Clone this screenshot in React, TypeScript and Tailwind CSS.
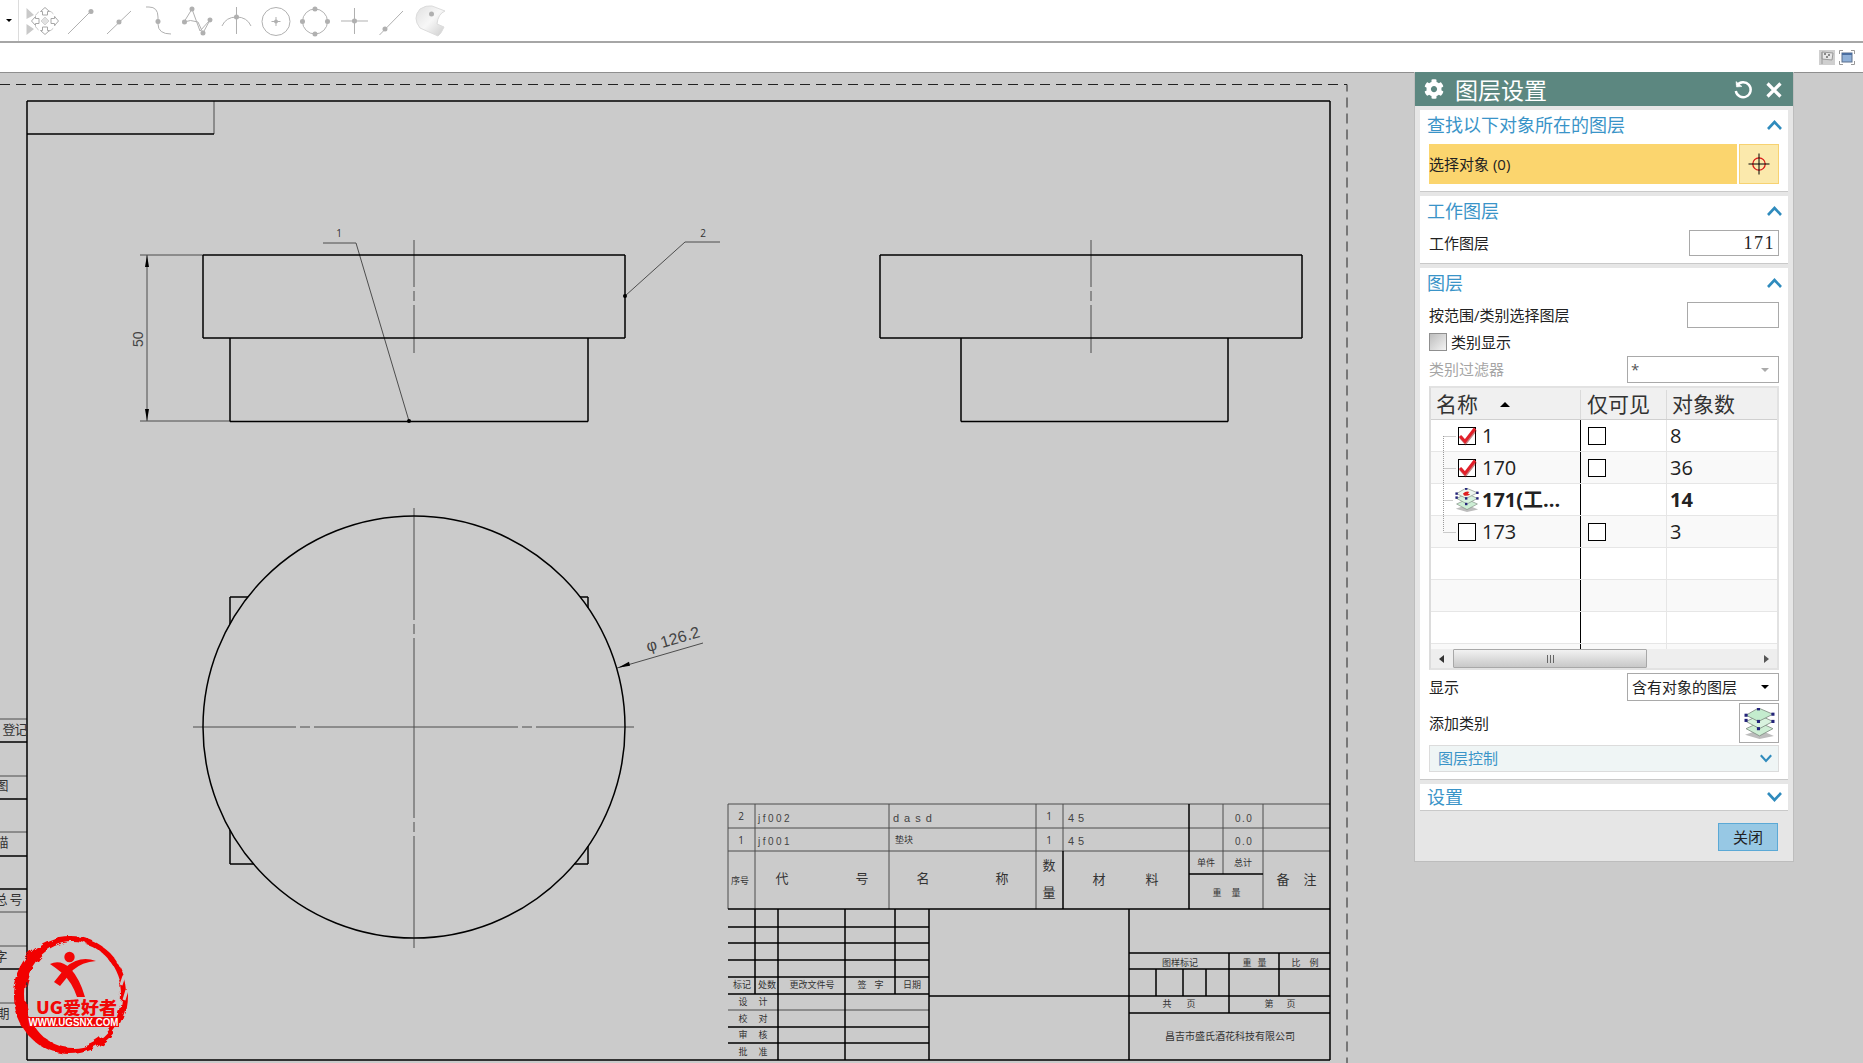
import React from "react";
import { FaCog } from "react-icons/fa";

type L = [number, number, number, number];

const gray = "#b0b0b0";

function Dot({ x, y, r = 2.500 }: { x: number; y: number; r?: number }) {
  return <circle cx={x} cy={y} r={r} fill={gray} stroke="none" />;
}

function Tool({ children, width = 39.3 }: { children: React.ReactNode; width?: number }) {
  return (
    <svg width={width} height={41} viewBox={`0 0 ${width} 41`} fill="none" stroke={gray} strokeWidth={1} className="shrink-0">
      {children}
    </svg>
  );
}

function Toolbar() {
  return (
    <div className="flex h-[43px] shrink-0 items-start border-b-2 border-[#a6a6a6] bg-white">
      <div className="flex h-[41px] w-[19px] shrink-0 items-center justify-end border-r border-[#dcdcdc] pr-[6px]">
        <span className="h-0 w-0 border-x-[3px] border-t-[3px] border-x-transparent border-t-black" />
      </div>
      <svg width={41} height={41} viewBox="0 0 41 41" fill="none" className="shrink-0">
        <path d="M7.500 8 L15 15 L7.500 19Z M7.500 24 L15 29 L7.500 35Z" fill="#c9c9c9" />
        <circle cx={26} cy={21} r={11} stroke="#c4c4c4" strokeDasharray="5 3" />
        <path d="M26 17 l4 4 l-4 4 l-4 -4Z" fill="#e2e2e2" stroke="#d2d2d2" />
        <path d="M23.500 15 v-3.500 h-2 l4.500 -4 l4.500 4 h-2 v3.500Z M23.500 27 v3.500 h-2 l4.500 4 l4.500 -4 h-2 v-3.500Z M20 18.500 h-3.500 v-2 l-4 4.500 l4 4.500 v-2 h3.500Z M32 18.500 h3.500 v-2 l4 4.500 l-4 4.500 v-2 h-3.500Z" fill="#fff" stroke="#a8a8a8" />
      </svg>
      <Tool><path d="M8 34 L31 11" /><Dot x={31} y={11.500} /></Tool>
      <Tool><path d="M8 34 L32 11" /><Dot x={20} y={22} /></Tool>
      <Tool><path d="M7 7 H10 Q19 7 19 17 V24 Q19 34 32 34" /><Dot x={19} y={21.500} /></Tool>
      <Tool>
        <path d="M6 22 L14 9 L22 31 L32 20 L25 33 L20 22 Q12 19 6 22" />
        <Dot x={14} y={9} /><Dot x={6.500} y={22} /><Dot x={32} y={20} /><Dot x={25} y={33} />
      </Tool>
      <Tool><path d="M19.500 7 V34 M5 26 Q9 17 19.500 17 Q30 17 34 26" /><Dot x={19.500} y={17} /></Tool>
      <Tool><circle cx={20} cy={21.500} r={14} /><path d="M20 17 V26 M15.500 21.500 H24.500" /><Dot x={20} y={21.500} r={2} /></Tool>
      <Tool>
        <circle cx={19} cy={21.500} r={12.500} />
        <Dot x={19} y={9} /><Dot x={19} y={34} /><Dot x={6.500} y={21.500} /><Dot x={31.500} y={21.500} />
      </Tool>
      <Tool><path d="M19.500 8 V34 M6 21 H33" /><Dot x={19.500} y={21} /></Tool>
      <Tool><path d="M5.500 35 L29 11" /><Dot x={11} y={29} /></Tool>
      <svg width={36} height={41} viewBox="0 0 36 41" className="shrink-0">
        <defs>
          <linearGradient id="sf" x1="0" y1="0" x2="1" y2="1">
            <stop offset="0" stopColor="#e0e0e0" />
            <stop offset="0.5" stopColor="#f7f7f7" />
            <stop offset="1" stopColor="#cccccc" />
          </linearGradient>
        </defs>
        <path d="M6 9 Q12 5 18 6 L31 11 Q24 14 23 24 L30 27 Q27 34 24 36 L6 28 Q-2 18 6 9Z" fill="url(#sf)" stroke="#dcdcdc" />
        <circle cx={17.500} cy={14} r={2.500} fill={gray} />
      </svg>
    </div>
  );
}

const heavy: L[] = [
  [27, 101, 1330, 101], [27, 101, 27, 1060], [27, 1060, 1330, 1060], [1330, 101, 1330, 1060],
  [27, 134, 214, 134],
  [203, 255, 625, 255], [203, 338, 625, 338], [203, 255, 203, 338], [625, 255, 625, 338],
  [230, 338, 230, 421.500], [588, 338, 588, 421.500], [230, 421.500, 588, 421.500],
  [880, 255, 1302, 255], [880, 338, 1302, 338], [880, 255, 880, 338], [1302, 255, 1302, 338],
  [961, 338, 961, 421.500], [1228, 338, 1228, 421.500], [961, 421.500, 1228, 421.500],
  [230, 597, 230, 624], [230, 597, 248, 597], [588, 597, 588, 608], [580, 597, 588, 597],
  [230, 830, 230, 864], [230, 864, 254, 864], [588, 846, 588, 864], [574, 864, 588, 864],
  [755, 909, 755, 994], [778, 909, 778, 1060], [845, 909, 845, 1060], [895, 909, 895, 994],
  [929, 909, 929, 1060], [728, 909, 1330, 909], [728, 927, 929, 927], [728, 943, 929, 943], [728, 960, 929, 960],
  [728, 977, 929, 977], [728, 994, 929, 994], [728, 1027, 929, 1027], [728, 1043, 929, 1043],
  [929, 996, 1330, 996], [1129, 909, 1129, 1060], [1129, 953, 1330, 953], [1129, 969, 1330, 969], [1129, 1013, 1330, 1013],
  [1229, 953, 1229, 1013], [1279, 953, 1279, 996], [1156, 969, 1156, 996], [1183, 969, 1183, 996], [1206, 969, 1206, 996],
  [1189, 874, 1263, 874], [1063, 851, 1063, 909], [1189, 804, 1189, 909],
  [0, 742, 27, 742], [0, 799, 27, 799], [0, 856, 27, 856], [0, 889, 27, 889], [0, 969, 27, 969], [0, 1027, 27, 1027],
];

const thin: L[] = [
  [214, 101, 214, 134],
  [140, 255, 203, 255], [140, 421, 230, 421], [147, 255, 147, 421],
  [323, 243, 356, 243], [356, 243, 409, 421], [625, 296, 685, 242], [685, 242, 720, 242],
  [414, 240, 414, 287], [414, 291, 414, 301], [414, 305, 414, 353],
  [1091, 240, 1091, 287], [1091, 291, 1091, 301], [1091, 305, 1091, 353],
  [193, 727, 296, 727], [300, 727, 310, 727], [314, 727, 518, 727], [522, 727, 532, 727], [536, 727, 634, 727],
  [414, 508, 414, 620], [414, 624, 414, 634], [414, 638, 414, 818], [414, 822, 414, 832], [414, 836, 414, 948],
  [617, 668, 703, 643],
  [728, 804, 1330, 804], [728, 828, 1330, 828], [728, 851, 1330, 851], [728, 804, 728, 909],
  [755, 804, 755, 909], [889, 804, 889, 909], [1036, 804, 1036, 909], [1063, 804, 1063, 851], [1223, 804, 1223, 874], [1263, 804, 1263, 909],
  [728, 1010, 929, 1010],
  [0, 719, 27, 719], [0, 776, 27, 776], [0, 832, 27, 832], [0, 912, 27, 912], [0, 946, 27, 946], [0, 1003, 27, 1003],
];

type T = [string, number, number, number?];

const small: T[] = [
  ["标记", 742, 985], ["处数", 767, 985], ["更改文件号", 812, 985], ["签", 862, 985], ["字", 879, 985], ["日期", 912, 985],
  ["设", 743, 1002], ["计", 763, 1002], ["校", 743, 1019], ["对", 763, 1019], ["审", 743, 1035], ["核", 763, 1035], ["批", 743, 1052], ["准", 763, 1052],
  ["图样标记", 1180, 963], ["重", 1247, 963], ["量", 1262, 963], ["比", 1296, 963], ["例", 1314, 963],
  ["共", 1167, 1004], ["页", 1191, 1004], ["第", 1269, 1004], ["页", 1291, 1004],
  ["单件", 1206, 863], ["总计", 1243, 863], ["重", 1217, 893], ["量", 1236, 893], ["序号", 740, 881], ["垫块", 904, 840],
  ["昌吉市盛氏酒花科技有限公司", 1230, 1037, 10],
  ["代", 782, 880, 13], ["号", 862, 880, 13], ["名", 923, 880, 13], ["称", 1002, 880, 13],
  ["数", 1049, 867, 13], ["量", 1049, 894, 13], ["材", 1099, 881, 13], ["料", 1152, 881, 13], ["备", 1283, 881, 13], ["注", 1310, 881, 13],
  ["登", 9, 731, 13], ["记", 21, 731, 13], ["图", 2, 787, 13], ["描", 2, 844, 13], ["总", 1, 901, 13], ["号", 16, 901, 13], ["字", 1, 958, 13], ["期", 3, 1015, 13],
];

const latin: T[] = [
  ["2", 741, 820], ["1", 741, 844], ["1", 1049, 820], ["1", 1049, 844], ["1", 339, 237], ["2", 703, 237],
];

function Drawing() {
  return (
    <svg width={1863} height={990} viewBox="0 73 1863 990" className="block">
      <defs>
        <filter id="rough" x="-10%" y="-10%" width="120%" height="120%">
          <feTurbulence type="fractalNoise" baseFrequency="0.09" numOctaves="3" seed="4" />
          <feDisplacementMap in="SourceGraphic" scale="7" />
        </filter>
      </defs>
      <path d="M0 84.500 H1347 V1063" fill="none" stroke="#222" strokeWidth={1} strokeDasharray="10 6" />
      {thin.map(([a, b, c, d], i) => (
        <line key={i} x1={a} y1={b} x2={c} y2={d} stroke="#4d4d4d" strokeWidth={1} />
      ))}
      {heavy.map(([a, b, c, d], i) => (
        <line key={i} x1={a} y1={b} x2={c} y2={d} stroke="#000" strokeWidth={1.500} />
      ))}
      <circle cx={414} cy={727} r={211} fill="none" stroke="#000" strokeWidth={1.500} />
      <circle cx={625} cy={296} r={2} fill="#000" />
      <circle cx={409} cy={421} r={2} fill="#000" />
      <path d="M147 255 l-2 12 h4Z M147 421 l-2 -12 h4Z M618 667.700 l11 -6 l1 4Z" fill="#000" />
      <g fill="#333" textAnchor="middle">
        {small.map(([s, x, y, f], i) => (
          <text key={i} x={x} y={y + 3} fontSize={f ?? 9}>{s}</text>
        ))}
        {latin.map(([s, x, y], i) => (
          <text key={i} x={x} y={y} fontSize={10}>{s}</text>
        ))}
      </g>
      <g fill="#444" fontSize={10} fontFamily="Liberation Sans">
        <text x={758} y={822} letterSpacing={2.500}>jf002</text>
        <text x={758} y={845} letterSpacing={2.500}>jf001</text>
        <text x={893} y={822} fontSize={11} letterSpacing={5}>dasd</text>
        <text x={1068} y={822} fontSize={11} letterSpacing={4}>45</text>
        <text x={1068} y={845} fontSize={11} letterSpacing={4}>45</text>
        <text x={1235} y={822} letterSpacing={1.500}>0.0</text>
        <text x={1235} y={845} letterSpacing={1.500}>0.0</text>
        <text x={0} y={0} fontSize={14} transform="translate(143 347) rotate(-90)">50</text>
        <text x={0} y={0} fontSize={16} transform="translate(648 652) rotate(-16)">φ 126.2</text>
      </g>
      <g fill="#f20606">
        <path
          filter="url(#rough)"
          fillRule="evenodd"
          d="M13 995 a57 59 0 1 0 114 0 a57 59 0 1 0 -114 0Z M25 995 a47 52 0 1 0 96 0 a47 52 0 1 0 -96 0Z"
        />
        <circle cx={69.500} cy={957} r={5.200} />
        <path d="M50 964 Q60 959 70 968 Q80 979 85 997 L77 997 Q72 982 62 973 Q56 968 50 964Z" />
        <path d="M96 961 Q82 962 73 970 L60 986 L54 982 L66 967 Q80 955 96 961Z" />
        <text x={36} y={1014} fontSize={17} fontWeight={900} textLength={81} lengthAdjust="spacingAndGlyphs" fontFamily="Noto Sans CJK SC, sans-serif">UG爱好者</text>
        <rect x={28} y={1017} width={91} height={10} />
      </g>
      <path d="M124 976 L121 985 M127 990 L124 1000" stroke="#cbcbcb" strokeWidth={3} fill="none" />
      <text x={28.500} y={1026} fontSize={10.500} fontWeight={700} fill="#fff" textLength={90} lengthAdjust="spacingAndGlyphs" fontFamily="Liberation Sans">WWW.UGSNX.COM</text>
    </svg>
  );
}

function Chevron({ up = false, small = false }: { up?: boolean; small?: boolean }) {
  return (
    <svg width={small ? 12 : 15} height={small ? 9 : 10} viewBox="0 0 15 10" fill="none" stroke="#2f8bbd" strokeWidth={2.600}>
      <path d={up ? "M1 9 L7.500 2 L14 9" : "M1 1 L7.500 8 L14 1"} />
    </svg>
  );
}

function SectionTitle({ text, up = true, h = "h-[30px]" }: { text: string; up?: boolean; h?: string }) {
  return (
    <div className={`flex ${h} items-center justify-between pl-[7px] pr-[6px] text-[18px] leading-none text-[#3a94c8]`}>
      <span>{text}</span>
      <Chevron up={up} />
    </div>
  );
}

function Section({ children }: { children: React.ReactNode }) {
  return <div className="border-b border-[#c9c9c9] bg-white">{children}</div>;
}

function Box({ children }: { children?: React.ReactNode }) {
  return <span className="flex h-[18px] w-[18px] shrink-0 items-center justify-center border border-black bg-white">{children}</span>;
}

function Check() {
  return (
    <svg width={18} height={18} viewBox="0 0 18 18" className="overflow-visible" fill="none">
      <path d="M2 9 L7 15 L17 2" stroke="#8a1010" strokeWidth={3.400} transform="translate(0.500 0.800)" opacity={0.5} />
      <path d="M2 9 L7 14.500 L17 1.500" stroke="#e2202a" strokeWidth={3} />
    </svg>
  );
}

function Layers({ w, red = false }: { w: number; red?: boolean }) {
  return (
    <svg width={w} height={w} viewBox="0 0 30 30">
      <path d="M15 21 L29 27 L15 30 L1 26Z" fill="#bdbdbd" />
      <path d="M15 14 L28 20 L15 27 L2 20Z" fill="#cdeed4" stroke="#7d8a80" strokeWidth={0.800} />
      <path d="M15 7 L28 13 L15 20 L2 13Z" fill="#d8f2de" stroke="#7d8a80" strokeWidth={0.800} />
      <path d="M14 0 L28 6 L14 13 L2 7Z" fill={red ? "#eef6f0" : "#c4ecce"} stroke="#7d8a80" strokeWidth={0.800} />
      {[[14, 0.800], [28, 6], [2, 7], [14, 13], [28, 13], [2, 12], [14, 20]].map(([x, y], i) => (
        <rect key={i} x={x - 1.500} y={y - 1.500} width={3} height={3} fill="#24247a" />
      ))}
      {red && <path d="M10 7 Q14 3 18 5 L16 7 L19 8 Q14 11 11 9Z" fill="#e02020" />}
    </svg>
  );
}

function Row({ i, name, count, check, hasVis = true, bold = false, icon = false }: {
  i: number; name?: string; count?: string; check?: boolean; hasVis?: boolean; bold?: boolean; icon?: boolean;
}) {
  const isData = name !== undefined;
  return (
    <div className={`grid h-[32px] grid-cols-[150px_86px_1fr] border-b border-[#e6e6e6] text-[20px] text-[#222] ${i % 2 ? "bg-[#f9f9f9]" : "bg-white"} ${bold ? "font-bold" : ""}`}>
      <div className="flex items-center border-r border-black pl-[27px]">
        {isData && (
          <>
            {icon ? <span className="-ml-[3px] -mr-[3px]"><Layers w={24} red /></span> : <Box>{check && <Check />}</Box>}
            <span className="ml-[6px] whitespace-nowrap">{name}</span>
          </>
        )}
      </div>
      <div className="flex items-center border-r border-[#e6e6e6] pl-[7px]">
        {isData && hasVis && <Box />}
      </div>
      <div className="flex items-center pl-[3px]">{count}</div>
    </div>
  );
}

function Panel() {
  return (
    <div className="absolute -top-px left-[1414px] w-[380px] border-x border-b border-[#bdbdbd] bg-[#e6e6e6]">
      <div className="flex h-[34px] items-center bg-[#5c8780] pl-[9px] pr-[11px] text-white">
        <FaCog size={20} />
        <span className="ml-[11px] translate-y-px text-[23px] leading-none">图层设置</span>
        <svg width={20} height={20} viewBox="0 0 20 20" fill="none" stroke="#fff" strokeWidth={2.400} className="ml-auto translate-y-px">
          <path d="M4 5.500 A7.500 7.500 0 1 1 2.800 11" />
          <path d="M3 1.500 L3.500 7 L9 6.500Z" fill="#fff" strokeWidth={0.500} />
        </svg>
        <svg width={16} height={16} viewBox="0 0 16 16" stroke="#fff" strokeWidth={3.200} className="ml-[13px] translate-y-px">
          <path d="M1.500 1.500 L14.500 14.500 M14.500 1.500 L1.500 14.500" />
        </svg>
      </div>
      <div className="flex flex-col gap-1 px-[5px] pt-1">
        <Section>
          <SectionTitle text="查找以下对象所在的图层" />
          <div className="mb-[7px] mt-1 flex h-[40px] gap-[2px] px-[9px]">
            <div className="flex flex-1 items-center bg-[#fbd56e] text-[15px] text-[#222]">选择对象 (0)</div>
            <div className="flex w-[40px] items-center justify-center border border-[#f7d271] bg-[#fbe9ac]">
              <svg width={22} height={22} viewBox="0 0 22 22" fill="none">
                <circle cx={11} cy={11} r={6.200} stroke="#d81818" strokeWidth={1.300} />
                <path d="M0.500 11 H21.500 M11 0.500 V21.500" stroke="#000" />
              </svg>
            </div>
          </div>
        </Section>
        <Section>
          <SectionTitle text="工作图层" />
          <div className="mb-[7px] mt-1 flex h-[26px] items-center justify-between px-[9px] text-[15px] text-[#222]">
            <span>工作图层</span>
            <div className="flex h-[26px] w-[90px] items-center justify-end border border-[#a9a9a9] pr-[3px] font-['Liberation_Serif',serif] text-[18px] tracking-[1.500px]">171</div>
          </div>
        </Section>
        <Section>
          <SectionTitle text="图层" />
          <div className="flex flex-col px-[9px] pb-[7px] text-[15px] text-[#222]">
            <div className="mt-1 flex h-[26px] items-center justify-between">
              <span>按范围/类别选择图层</span>
              <div className="h-[26px] w-[92px] border border-[#a9a9a9]" />
            </div>
            <div className="mt-[5px] flex h-[18px] items-center gap-[4px]">
              <span className="h-[18px] w-[18px] border border-[#8f8f8f] bg-gradient-to-br from-[#bdbdbd] to-[#f4f4f4]" />
              <span>类别显示</span>
            </div>
            <div className="mt-[5px] flex h-[27px] items-center justify-between text-[#a5a5a5]">
              <span>类别过滤器</span>
              <div className="flex h-[27px] w-[152px] items-center justify-between border border-[#a9a9a9] pl-[3px] pr-[9px] text-[#555]">
                <span>*</span>
                <span className="h-0 w-0 border-x-[4px] border-t-[4px] border-x-transparent border-t-[#aaa]" />
              </div>
            </div>
            <div className="relative mt-[3px] h-[284px] border-2 border-[#e2e2e2] border-l-[#dcdcdc]">
              <div className="h-[261px] overflow-hidden">
                <div className="grid h-[32px] grid-cols-[150px_86px_1fr] border-b border-[#d0d0d0] bg-[#f0f0f0] pt-[2px] text-[21px] leading-none text-[#333]">
                  <div className="flex items-center border-r border-[#dadada] pl-[5px]">
                    名称
                    <span className="ml-[22px] h-0 w-0 border-x-[5px] border-b-[5px] border-x-transparent border-b-black" />
                  </div>
                  <div className="flex items-center border-r border-[#dadada] pl-[6px]">仅可见</div>
                  <div className="flex items-center pl-[5px]">对象数</div>
                </div>
                <Row i={0} name="1" count="8" check />
                <Row i={1} name="170" count="36" check />
                <Row i={0} name="171(工..." count="14" bold icon hasVis={false} />
                <Row i={1} name="173" count="3" />
                <Row i={0} />
                <Row i={1} />
                <Row i={0} />
                <Row i={1} />
              </div>
              <svg width={16} height={100} viewBox="0 0 16 100" fill="none" stroke="#9a9a9a" strokeDasharray="1 1" className="absolute left-[12px] top-[48px]">
                <path d="M0.500 0 V96 M0.500 0.500 H13 M0.500 32.500 H13 M0.500 64.500 H10 M0.500 96.500 H13" />
              </svg>
              <div className="flex h-[19px] items-center bg-[#eeeeee] px-[8px]">
                <span className="h-0 w-0 border-y-[4px] border-r-[5px] border-y-transparent border-r-[#333]" />
                <div className="ml-[9px] flex h-[19px] w-[194px] items-center justify-center gap-[2px] rounded-[1px] border border-[#a8a8a8] bg-gradient-to-b from-[#f2f2f2] to-[#c8c8c8]">
                  <span className="h-[8px] w-px bg-[#666]" />
                  <span className="h-[8px] w-px bg-[#666]" />
                  <span className="h-[8px] w-px bg-[#666]" />
                </div>
                <span className="ml-auto h-0 w-0 border-y-[4px] border-l-[5px] border-y-transparent border-l-[#555]" />
              </div>
            </div>
            <div className="mt-[3px] flex h-[28px] items-center justify-between">
              <span>显示</span>
              <div className="flex h-[28px] w-[152px] items-center justify-between border border-[#a9a9a9] pl-[4px] pr-[9px]">
                <span>含有对象的图层</span>
                <span className="h-0 w-0 border-x-[4px] border-t-[4px] border-x-transparent border-t-black" />
              </div>
            </div>
            <div className="mt-[2px] flex h-[40px] items-center justify-between">
              <span>添加类别</span>
              <div className="flex h-[40px] w-[40px] items-center justify-center border border-[#a9a9a9]">
                <Layers w={31} />
              </div>
            </div>
            <div className="mt-[2px] flex h-[27px] items-center justify-between border border-[#dcdcdc] bg-[#eff5f5] pl-[8px] pr-[6px] text-[#3a94c8]">
              <span>图层控制</span>
              <Chevron small />
            </div>
          </div>
        </Section>
        <Section>
          <SectionTitle text="设置" up={false} h="h-[26px]" />
        </Section>
      </div>
      <div className="flex h-[50px] items-start justify-end pr-[15px] pt-[12px]">
        <button className="h-[28px] w-[60px] border border-[#5ba9d6] bg-[#97c8e4] text-[15px] text-[#222]">关闭</button>
      </div>
    </div>
  );
}

export default function App() {
  return (
    <div className="flex h-[1063px] w-[1863px] flex-col overflow-hidden bg-white font-['Open_Sans','Noto_Sans_CJK_SC',sans-serif]">
      <Toolbar />
      <div className="flex h-[30px] shrink-0 items-center justify-end gap-[4px] border-b border-[#8f8f8f] bg-white pr-[8px]">
        <svg width={16} height={15} viewBox="0 0 16 15">
          <rect width={16} height={15} fill="#cfcfcf" />
          <path d="M3 2 V14 M3 2 L14 3 L13 10 L3 9Z" fill="#e8e8e8" stroke="#9a9a9a" />
          <path d="M5 3 h2 v2 h-2Z M9 4 h2 v2 h-2Z M7 6 h2 v2 h-2Z" fill="#8a8a8a" />
        </svg>
        <svg width={16} height={15} viewBox="0 0 16 15" fill="none">
          <path d="M0.500 4 V0.500 H4 M12 0.500 H15.500 V4 M0.500 11 V14.500 H4 M12 14.500 H15.500 V11" stroke="#999" />
          <rect x={3} y={3} width={10} height={9} fill="#8fb0d8" stroke="#5a6f8c" />
          <rect x={3} y={3} width={10} height={2} fill="#4a6ea0" />
        </svg>
      </div>
      <div className="relative flex-1 bg-[#cbcbcb]">
        <Drawing />
        <Panel />
      </div>
    </div>
  );
}
